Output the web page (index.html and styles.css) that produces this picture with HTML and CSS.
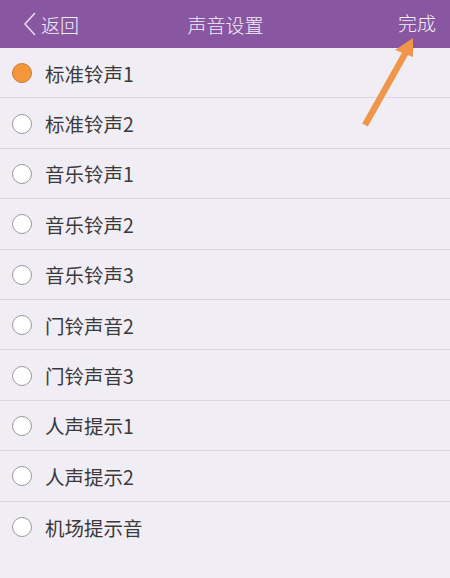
FILE: index.html
```html
<!DOCTYPE html>
<html lang="zh-CN">
<head>
  <meta charset="UTF-8">
  <meta name="viewport" content="width=device-width, initial-scale=1.0">
  <title>声音设置</title>
  <link rel="stylesheet" href="styles.css">
</head>
<body>

  <div class="top-bar">
    <div class="back">
      <svg class="chevron" width="14" height="26" viewBox="0 0 14 26">
        <path d="M12 2 L2 13 L12 24" fill="none" stroke="#e8def0" stroke-width="1.5"/>
      </svg>
      <span>返回</span>
    </div>
    <div class="title">声音设置</div>
    <div class="done">完成</div>
  </div>

  <!-- ringtone list -->
  <ul class="sound-list">
    <li class="item selected"><span class="radio"></span>标准铃声1</li>
    <li class="item"><span class="radio"></span>标准铃声2</li>
    <li class="item"><span class="radio"></span>音乐铃声1</li>
    <li class="item"><span class="radio"></span>音乐铃声2</li>
    <li class="item"><span class="radio"></span>音乐铃声3</li>
    <li class="item"><span class="radio"></span>门铃声音2</li>
    <li class="item"><span class="radio"></span>门铃声音3</li>
    <li class="item"><span class="radio"></span>人声提示1</li>
    <li class="item"><span class="radio"></span>人声提示2</li>
    <li class="item"><span class="radio"></span>机场提示音</li>
  </ul>

  <svg class="pointer" width="80" height="100" viewBox="0 0 80 100">
    <path d="M15 95 L56 22" stroke="#f0964a" stroke-width="6.5" stroke-linecap="butt"/>
    <polygon points="63,8 45,20 63,27" fill="#f0964a"/>
  </svg>

</body>
</html>
```

FILE: styles.css
```css
body {
  margin: 0;
  width: 450px;
  height: 578px;
  background: #f1edf4;
  font-family: "Noto Sans CJK SC", "Noto Sans", sans-serif;
  color: #3a3a3a;
  position: relative;
  overflow: hidden;
}
.top-bar {
  height: 48px;
  background: #8957a2;
  color: #f4eef8;
  display: flex;
  align-items: center;
  justify-content: space-between;
  padding: 0 14px 0 23px;
  font-size: 19px;
  font-weight: 300;
}
.back {
  display: flex;
  align-items: center;
  gap: 4px;
  width: 80px;
}
.title {
  flex: 1;
  text-align: center;
  margin-left: -36px;
}
.done {
  width: 52px;
  text-align: right;
  margin-top: -4px;
}
.sound-list {
  list-style: none;
  margin: 0;
  padding: 0;
}
.item {
  height: 50.4px;
  box-sizing: border-box;
  display: flex;
  align-items: center;
  padding-left: 12px;
  font-size: 19.5px;
  border-bottom: 1px solid #ddd6e2;
  padding-top: 1px;
}
.item:last-child {
  border-bottom: none;
}
.radio {
  width: 20px;
  height: 20px;
  border-radius: 50%;
  border: 1px solid #999;
  background: #fff;
  margin-right: 13px;
  box-sizing: border-box;
}
.selected .radio {
  background: #f5963a;
  border-color: #c87a38;
}
.pointer {
  position: absolute;
  left: 350px;
  top: 30px;
}
```
